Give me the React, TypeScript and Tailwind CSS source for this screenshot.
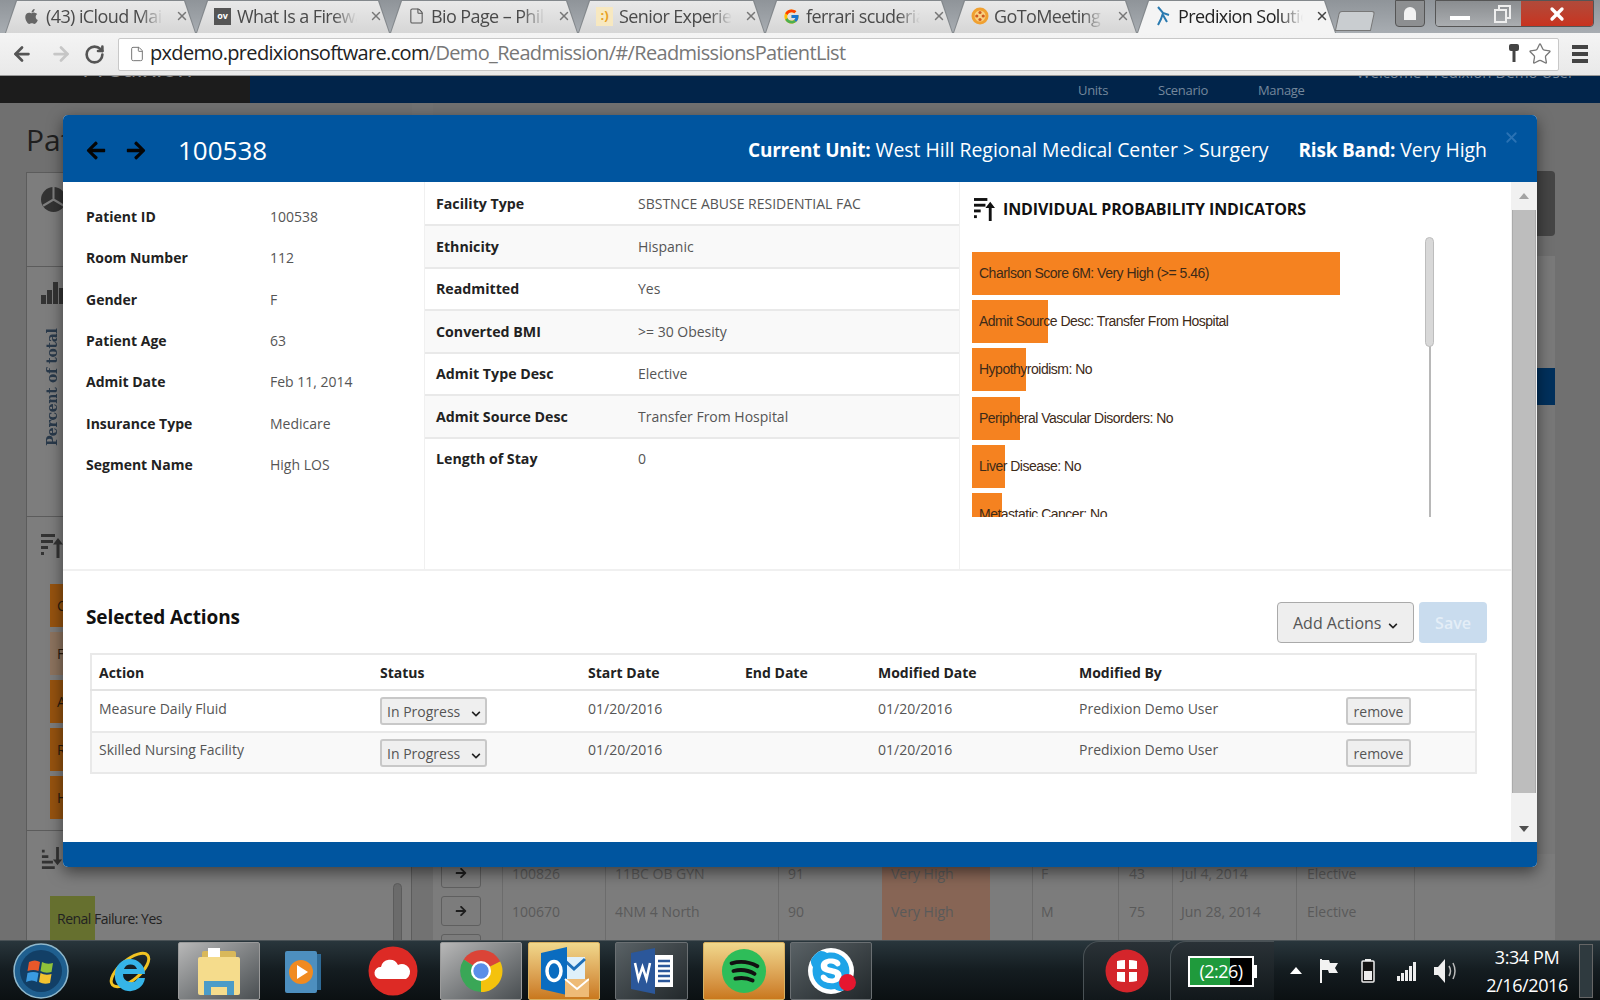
import { FaApple, FaArrowLeft, FaArrowRight, FaChevronDown, FaSkype } from "react-icons/fa";
import { FcGoogle } from "react-icons/fc";
import { ArrowLeft, ArrowRight, File, RotateCw, Star, X } from "lucide-react";
import type { ReactNode } from "react";

const tabs: { title: string; width: number; icon: ReactNode; active?: boolean }[] = [
  { title: "(43) iCloud Mail", width: 191, icon: <FaApple className="w-[17px] h-[17px] text-[#666]" /> },
  {
    title: "What Is a Firewall",
    width: 194,
    icon: <span className="w-[17px] h-[17px] bg-[#555] text-white text-[9px] font-bold flex items-center justify-center">ov</span>,
  },
  { title: "Bio Page – Philip", width: 188, icon: <File className="w-[17px] h-[18px] text-[#555]" strokeWidth={1.5} /> },
  {
    title: "Senior Experience",
    width: 187,
    icon: <span className="w-[17px] h-[19px] bg-[#f7e8c0] text-[#e8a020] text-[13px] font-bold flex items-center justify-center">:)</span>,
  },
  { title: "ferrari scuderia", width: 188, icon: <FcGoogle className="w-[17px] h-[17px]" /> },
  {
    title: "GoToMeeting",
    width: 184,
    icon: (
      <svg viewBox="0 0 18 18" className="w-[18px] h-[18px]">
        <circle cx="9" cy="9" r="8.5" fill="#f0a030" />
        <circle cx="9" cy="9" r="5.5" fill="#f8d080" />
        <circle cx="9" cy="5.5" r="1.6" fill="#d05a20" />
        <circle cx="9" cy="12.5" r="1.6" fill="#d05a20" />
        <circle cx="5.8" cy="9" r="1.6" fill="#d05a20" />
        <circle cx="12.2" cy="9" r="1.6" fill="#d05a20" />
      </svg>
    ),
  },
  {
    title: "Predixion Solutions",
    width: 199,
    active: true,
    icon: (
      <svg viewBox="0 0 16 22" className="w-[16px] h-[22px]" fill="none" stroke="#2a7ab0" strokeWidth="2">
        <path d="M3 2l5 6 6 2M8 8l-2 6-3 6M8 10l4 7" />
      </svg>
    ),
  },
];

const leftInfo = [
  ["Patient ID", "100538"],
  ["Room Number", "112"],
  ["Gender", "F"],
  ["Patient Age", "63"],
  ["Admit Date", "Feb 11, 2014"],
  ["Insurance Type", "Medicare"],
  ["Segment Name", "High LOS"],
];

const midInfo = [
  ["Facility Type", "SBSTNCE ABUSE RESIDENTIAL FAC"],
  ["Ethnicity", "Hispanic"],
  ["Readmitted", "Yes"],
  ["Converted BMI", ">= 30 Obesity"],
  ["Admit Type Desc", "Elective"],
  ["Admit Source Desc", "Transfer From Hospital"],
  ["Length of Stay", "0"],
];

const indicators = [
  { label: "Charlson Score 6M: Very High (>= 5.46)", width: 368 },
  { label: "Admit Source Desc: Transfer From Hospital", width: 76 },
  { label: "Hypothyroidism: No", width: 54 },
  { label: "Peripheral Vascular Disorders: No", width: 48 },
  { label: "Liver Disease: No", width: 33 },
  { label: "Metastatic Cancer: No", width: 30 },
];

const actions = ["Measure Daily Fluid", "Skilled Nursing Facility"];

const bgBars = [
  { label: "Charlson Score", color: "bg-[#96530f]" },
  { label: "Fluid", color: "bg-[#8c735e]" },
  { label: "Admit Source", color: "bg-[#96530f]" },
  { label: "Renal Failure", color: "bg-[#96530f]" },
  { label: "Hypertension", color: "bg-[#96530f]" },
];

const bgRows = [
  ["100826", "11BC OB GYN", "91", "F", "43", "Jul 4, 2014", "Elective"],
  ["100670", "4NM 4 North", "90", "M", "75", "Jun 28, 2014", "Elective"],
  ["", "", "", "", "", "", ""],
];

function SortIcon({ className }: { className: string }) {
  return (
    <svg viewBox="0 0 22 24" className={className} fill="currentColor">
      <rect x="0" y="0" width="14" height="3" />
      <rect x="0" y="6" width="12" height="3" />
      <rect x="0" y="12" width="7" height="3" />
      <rect x="0" y="18" width="3" height="3" />
      <path d="M15.5 24V10.5H12L17 4l5 6.5h-3.500V24z" />
    </svg>
  );
}

function Tab({ title, width, icon, active }: { title: string; width: number; icon: ReactNode; active?: boolean }) {
  return (
    <div
      className="h-[33px] bg-[#83888c] [clip-path:polygon(11px_0,calc(100%-11px)_0,100%_100%,0_100%)]"
      style={{ width }}
    >
      <div
        className={`h-[32px] mx-[1px] mt-[1px] pb-[2px] flex items-center pl-[17px] pr-[6px] [clip-path:polygon(11px_0,calc(100%-11px)_0,100%_100%,0_100%)] ${
          active ? "bg-[#f4f4f4] text-[#222]" : "bg-linear-to-b from-[#e9e9e9] to-[#d6d6d6] text-[#4a4a4a]"
        }`}
      >
        <span className="w-[23px] shrink-0 flex items-center">{icon}</span>
        <span className="flex-1 min-w-0 overflow-hidden whitespace-nowrap text-[18px] tracking-[-0.6px] [mask-image:linear-gradient(to_right,black_80%,transparent)]">
          {title}
        </span>
        <X className={`w-[14px] h-[14px] ml-[12px] shrink-0 ${active ? "text-[#444]" : "text-[#777]"}`} strokeWidth={2.5} />
      </div>
    </div>
  );
}

function BrowserChrome() {
  return (
    <div className="shrink-0 font-['Open_Sans',sans-serif]">
      <div className="h-[33px] flex items-end pl-[5px] bg-linear-to-b from-[#8f9499] to-[#a8adb2]">
        {tabs.map((t) => (
          <Tab key={t.title} {...t} />
        ))}
        <div className="w-[36px] h-[20px] ml-[1px] mb-[2px] bg-[#c9cdd0] border border-[#777] rounded-t-[3px] -skew-x-12" />
        <div className="self-start ml-[22px] w-[30px] h-[27px] rounded-b-[4px] border border-[#555] bg-[#8d8f91] flex items-center justify-center">
          <div className="w-[12px] h-[13px] bg-[#f2f2f2] rounded-t-full" />
        </div>
        <div className="self-start ml-[10px] w-[159px] h-[27px] rounded-b-[4px] border border-[#555] flex overflow-hidden">
          <div className="w-[47px] bg-linear-to-b from-[#8a8d90] to-[#aaadb0] flex items-end justify-center pb-[6px]">
            <div className="w-[20px] h-[4px] bg-white" />
          </div>
          <div className="w-[38px] bg-linear-to-b from-[#8a8d90] to-[#aaadb0] flex items-center justify-center">
            <svg viewBox="0 0 18 18" className="w-[18px] h-[18px]" fill="none" stroke="#eee" strokeWidth="2">
              <path d="M6 4V1h11v12h-3" />
              <rect x="2" y="5" width="11" height="12" />
            </svg>
          </div>
          <div className="flex-1 bg-linear-to-b from-[#b04a3a] to-[#c8321e] flex items-center justify-center">
            <X className="w-[20px] h-[20px] text-white" strokeWidth={4} />
          </div>
        </div>
      </div>
      <div className="h-[43px] flex items-center bg-linear-to-b from-[#f4f4f4] to-[#e9e9e9] border-b border-[#999]">
        <ArrowLeft className="w-[22px] h-[22px] ml-[11px] text-[#555]" strokeWidth={3} />
        <ArrowRight className="w-[22px] h-[22px] ml-[17px] text-[#c6c6c6]" strokeWidth={3} />
        <RotateCw className="w-[21px] h-[21px] ml-[12px] text-[#555]" strokeWidth={3} />
        <div className="ml-[13px] w-[1441px] h-[33px] bg-white border border-[#c8c8c8] rounded-[2px] flex items-center pl-[10px] pr-[6px]">
          <File className="w-[16px] h-[20px] text-[#777]" strokeWidth={1.5} />
          <span className="ml-[5px] -mt-[3px] flex-1 text-[20px] tracking-[-0.67px] text-[#777] whitespace-nowrap">
            <span className="text-[#222]">pxdemo.predixionsoftware.com</span>/Demo_Readmission/#/ReadmissionsPatientList
          </span>
          <svg viewBox="0 0 12 22" className="w-[12px] h-[22px]" fill="#444">
            <rect x="1" y="1" width="10" height="7" rx="2" />
            <rect x="4.500" y="8" width="3" height="11" />
          </svg>
          <Star className="w-[24px] h-[24px] ml-[8px] text-[#777]" strokeWidth={1.3} />
        </div>
        <div className="ml-[13px] flex flex-col gap-[3px]">
          <div className="w-[16px] h-[4px] bg-[#444]" />
          <div className="w-[16px] h-[4px] bg-[#444]" />
          <div className="w-[16px] h-[4px] bg-[#444]" />
        </div>
      </div>
    </div>
  );
}

function BackgroundPage() {
  return (
    <div className="flex-1 min-h-0 flex flex-col bg-[#707070] font-['Open_Sans',sans-serif] overflow-hidden">
      <div className="h-[27px] shrink-0 flex bg-[#01244a] overflow-hidden">
        <div className="w-[250px] bg-[#1c1c1c] pl-[82px] -mt-[27px] text-[25px] text-[#8a8a8a]">Predixion</div>
        <div className="w-[828px] shrink-0" />
        <div className="flex gap-[50px] pt-[5px] text-[13px] tracking-[-0.3px] text-[#75889c]">
          <span>Units</span>
          <span>Scenario</span>
          <span>Manage</span>
        </div>
        <div className="ml-[52px] -mt-[15px] text-[15px] text-[#75889c] whitespace-nowrap">Welcome Predixion Demo User</div>
      </div>

      <div className="flex-1 min-h-0 flex pl-[26px]">
        <div className="w-[386px] shrink-0 flex flex-col">
          <div className="h-[69px] shrink-0 pt-[12px] text-[30px] leading-[50px] text-[#1f1f1f]">Patient List</div>
          <div className="flex-1 border-l border-t border-r border-[#5c5c5c] bg-[#7d7d7d] text-[#3a3a3a] flex flex-col">
            <div className="h-[94px] shrink-0 border-b border-[#5c5c5c] pt-[14px] pl-[14px]">
              <svg viewBox="0 0 24 24" className="w-[25px] h-[25px]">
                <circle cx="12" cy="12" r="12" fill="#333" />
                <path d="M12 12V0M12 12l10 6M12 12L2 18" stroke="#7f7f7f" strokeWidth="2" />
              </svg>
            </div>
            <div className="h-[250px] shrink-0 border-b border-[#5c5c5c] pt-[15px] pl-[14px]">
              <svg viewBox="0 0 24 22" className="w-[24px] h-[22px]" fill="#333">
                <rect x="0" y="13" width="5" height="9" />
                <rect x="6" y="8" width="5" height="14" />
                <rect x="12" y="0" width="5" height="22" />
                <rect x="18" y="6" width="5" height="16" />
              </svg>
              <div className="mt-[24px] ml-[1px] h-[118px] [writing-mode:vertical-rl] rotate-180 text-[14px] font-bold text-[#29394a] font-['DejaVu_Serif',serif] whitespace-nowrap tracking-[-0.3px]">
                Percent of total
              </div>
            </div>
            <div className="h-[314px] shrink-0 border-b border-[#5c5c5c] pt-[17px] pl-[14px]">
              <SortIcon className="w-[22px] h-[24px] text-[#333]" />
              <div className="mt-[26px] ml-[9px] flex flex-col gap-[5px]">
                {bgBars.map((b) => (
                  <div key={b.label} className={`w-[200px] h-[43px] pl-[7px] flex items-center text-[14px] text-[#2a1a0c] ${b.color}`}>
                    {b.label}
                  </div>
                ))}
              </div>
            </div>
            <div className="flex-1 relative pt-[16px] pl-[14px]">
              <SortIcon className="w-[22px] h-[22px] text-[#333] -scale-y-100" />
              <div className="mt-[27px] ml-[9px] w-[45px] h-[44px] bg-[#66702f] pl-[7px] flex items-center text-[14px] tracking-[-0.5px] text-[#222] whitespace-nowrap">
                Renal Failure: Yes
              </div>
              <div className="absolute left-[366px] top-[52px] w-[9px] h-[80px] rounded-full bg-[#6b6b6b] border border-[#5c5c5c]" />
            </div>
          </div>
        </div>

        <div className="w-[21px] shrink-0 bg-[#727272]" />

        <div className="w-[1122px] shrink-0 flex flex-col pt-[68px] text-[14px] text-[#5a5a5a]">
          <div className="h-[65px] shrink-0 flex justify-end">
            <div className="w-[80px] bg-[#454545] rounded-r-[4px]" />
          </div>
          <div className="h-[20px] shrink-0" />
          <div className="h-[112px] shrink-0 bg-[#7a7a7a]" />
          <div className="h-[37px] shrink-0 bg-[#00305c]" />
          <div className="h-[449px] shrink-0 bg-[#787878]" />
          {bgRows.map((r, i) => (
            <div key={i} className="h-[38px] shrink-0 flex items-stretch bg-[#7c7c7c]">
              <div className="w-[69px] flex items-center pl-[8px]">
                <div className="w-[40px] h-[30px] rounded-[3px] border border-[#5f5f5f] bg-[#7c7c7c] flex items-center justify-center">
                  {r[0] && <FaArrowRight className="w-[12px] h-[12px] text-[#1e1e1e]" />}
                </div>
              </div>
              <div className="w-[103px] border-l border-[#6c6c6c] pl-[9px] flex items-center">{r[0]}</div>
              <div className="w-[173px] border-l border-[#6c6c6c] pl-[9px] flex items-center">{r[1]}</div>
              <div className="w-[104px] border-l border-[#6c6c6c] pl-[9px] flex items-center">{r[2]}</div>
              <div className="w-[108px] bg-[#876555] pl-[9px] flex items-center">{r[0] && "Very High"}</div>
              <div className="w-[42px]" />
              <div className="w-[86px] border-l border-[#6c6c6c] pl-[8px] flex items-center">{r[3]}</div>
              <div className="w-[54px] border-l border-[#6c6c6c] pl-[10px] flex items-center">{r[4]}</div>
              <div className="w-[124px] border-l border-[#6c6c6c] pl-[8px] flex items-center">{r[5]}</div>
              <div className="w-[118px] border-l border-[#6c6c6c] pl-[10px] flex items-center">{r[6]}</div>
              <div className="flex-1 border-l border-[#6c6c6c]" />
            </div>
          ))}
        </div>
      </div>
    </div>
  );
}

function Select() {
  return (
    <div className="w-[107px] h-[28px] rounded-[3px] border-2 border-[#c8c8c8] bg-[#efefef] flex items-center justify-between pl-[5px] pr-[4px] text-[#555]">
      In Progress
      <FaChevronDown className="w-[10px] h-[10px] text-[#222] mt-[6px]" />
    </div>
  );
}

function PatientModal() {
  return (
    <div className="absolute left-[63px] top-[39px] w-[1474px] h-[752px] flex flex-col rounded-[5px] overflow-hidden shadow-[0_5px_15px_rgba(0,0,0,0.5)] font-['Open_Sans',sans-serif] text-[14px] bg-white">
      <div className="relative h-[67px] shrink-0 bg-[#00559f] flex items-center pt-[3px] pl-[22px] pr-[50px]">
        <FaArrowLeft className="w-[22px] h-[21px] text-[#050505]" />
        <FaArrowRight className="w-[22px] h-[21px] text-[#050505] ml-[18px]" />
        <span className="ml-[31px] text-[26px] text-white">100538</span>
        <div className="ml-auto text-[19.4px] text-white whitespace-nowrap">
          <b className="text-[19px] tracking-[-0.2px]">Current Unit:</b> West Hill Regional Medical Center &gt; Surgery
          <b className="ml-[30px] text-[19px] tracking-[-0.2px]">Risk Band:</b> Very High
        </div>
        <X className="absolute right-[17px] top-[14px] w-[17px] h-[17px] text-[#2a72b4]" strokeWidth={2.5} />
      </div>

      <div className="flex-1 min-h-0 flex">
        <div className="flex-1 min-w-0 flex flex-col">
          <div className="h-[389px] shrink-0 flex border-b-2 border-[#f0f0f0]">
            <div className="w-[361px] shrink-0 pl-[23px] pt-[14px]">
              {leftInfo.map(([k, v]) => (
                <div key={k} className="h-[41.3px] flex items-center">
                  <span className="w-[184px] font-bold text-[14px] text-[#222]">{k}</span>
                  <span className="text-[#555]">{v}</span>
                </div>
              ))}
            </div>
            <div className="w-[536px] shrink-0 pt-[1.5px] border-x border-[#f0f0f0]">
              {midInfo.map(([k, v], i) => (
                <div
                  key={k}
                  className={`h-[42.5px] flex items-center pl-[11px] border-b-2 ${i < 6 ? "border-[#e9e9e9]" : "border-transparent"} ${i % 2 ? "bg-[#f9f9f9]" : "bg-white"}`}
                >
                  <span className="w-[202px] font-bold text-[14.2px] text-[#222]">{k}</span>
                  <span className="text-[#555]">{v}</span>
                </div>
              ))}
            </div>
            <div className="flex-1 min-w-0 pl-[12px] pt-[15px]">
              <div className="flex items-center h-[24px] pl-[2px]">
                <SortIcon className="w-[21px] h-[23px] text-[#111]" />
                <span className="ml-[8px] text-[16px] font-bold tracking-[-0.1px] text-[#111] whitespace-nowrap">INDIVIDUAL PROBABILITY INDICATORS</span>
              </div>
              <div className="relative mt-[16px] w-[462px] h-[280px] pt-[15px]">
                <div className="h-[265px] overflow-hidden flex flex-col gap-[5.2px]">
                  {indicators.map((b) => (
                    <div key={b.label} className="h-[43px] bg-[#f58220] flex items-center pl-[7px] shrink-0" style={{ width: b.width }}>
                      <span className="font-['Liberation_Sans',sans-serif] text-[14px] tracking-[-0.5px] text-[#3d2a18] whitespace-nowrap">{b.label}</span>
                    </div>
                  ))}
                </div>
                <div className="absolute left-[457px] top-[100px] bottom-0 w-[2px] bg-[#b8b8b8]" />
                <div className="absolute left-[453px] top-0 w-[9px] h-[110px] rounded-full bg-[#d8d8d8] border border-[#bdbdbd]" />
              </div>
            </div>
          </div>

          <div className="pl-[23px] pr-[24px] pt-[31px]">
            <div className="flex items-center h-[41px]">
              <span className="-mt-[10px] text-[19px] font-bold tracking-[-0.1px] text-[#111]">Selected Actions</span>
              <div className="ml-auto w-[137px] h-[41px] rounded-[4px] border border-[#aaa] bg-[#eeeeee] flex items-center pl-[15px] text-[16px] text-[#555]">
                Add Actions
                <FaChevronDown className="w-[10px] h-[10px] ml-[7px] mt-[6px] text-[#222]" />
              </div>
              <div className="ml-[5px] w-[68px] h-[41px] rounded-[4px] bg-[#c9dcee] flex items-center justify-center text-[16px] font-semibold text-[#e4eef7]">
                Save
              </div>
            </div>
            <table className="mt-[10px] ml-[4px] w-[1387px] table-fixed border-collapse border-2 border-[#e9e9e9] text-[#555]">
              <colgroup>
                <col className="w-[281px]" />
                <col className="w-[208px]" />
                <col className="w-[158px]" />
                <col className="w-[133px]" />
                <col className="w-[200px]" />
                <col className="w-[267px]" />
                <col />
              </colgroup>
              <thead>
                <tr className="h-[36px] border-b-2 border-[#e3e3e3] text-left text-[14px] text-[#222]">
                  <th className="pl-[7px] font-bold">Action</th>
                  <th className="pl-[8px] font-bold">Status</th>
                  <th className="pl-[8px] font-bold">Start Date</th>
                  <th className="pl-[7px] font-bold">End Date</th>
                  <th className="pl-[7px] font-bold">Modified Date</th>
                  <th className="pl-[8px] font-bold">Modified By</th>
                  <th />
                </tr>
              </thead>
              <tbody>
                {actions.map((a, i) => (
                  <tr key={a} className={`border-b-2 border-[#e9e9e9] align-top ${i % 2 ? "h-[41px] bg-[#f9f9f9]" : "h-[42px] bg-white"}`}>
                    <td className={`pl-[7px] ${i ? "pt-[6px]" : "pt-[7px]"}`}>{a}</td>
                    <td className="pl-[8px] pt-[6px]">
                      <Select />
                    </td>
                    <td className={`pl-[8px] ${i ? "pt-[6px]" : "pt-[7px]"}`}>01/20/2016</td>
                    <td />
                    <td className={`pl-[7px] ${i ? "pt-[6px]" : "pt-[7px]"}`}>01/20/2016</td>
                    <td className={`pl-[8px] ${i ? "pt-[6px]" : "pt-[7px]"}`}>Predixion Demo User</td>
                    <td className="pl-[8px] pt-[6px]">
                      <div className="w-[65px] h-[28px] rounded-[3px] border-2 border-[#c8c8c8] bg-[#efefef] flex items-center justify-center">remove</div>
                    </td>
                  </tr>
                ))}
              </tbody>
            </table>
          </div>
        </div>

        <div className="w-[26px] shrink-0 bg-[#f1f1f1] flex flex-col items-center">
          <div className="h-[28px] shrink-0 flex items-center justify-center">
            <div className="w-0 h-0 border-x-[5px] border-x-transparent border-b-[6px] border-b-[#a3a3a3]" />
          </div>
          <div className="w-[24px] h-[583px] bg-[#bdbdbd] border-x border-[#ababab]" />
          <div className="flex-1 flex items-end pb-[10px]">
            <div className="w-0 h-0 border-x-[5px] border-x-transparent border-t-[6px] border-t-[#505050]" />
          </div>
        </div>
      </div>

      <div className="h-[25px] shrink-0 bg-[#00559f]" />
    </div>
  );
}

function TaskButton({ lit, orange, className, children }: { lit?: boolean; orange?: boolean; className: string; children: ReactNode }) {
  return (
    <div
      className={`h-[58px] rounded-[2px] flex items-center justify-center ${className} ${
        orange
          ? "bg-linear-to-b from-[#f0d88c] to-[#c9781c] border border-[#d8b060]"
          : lit
            ? "bg-linear-to-br from-[#b8b8b8] to-[#4a4f52] border border-[#9a9a9a]"
            : "bg-linear-to-br from-[#5a6266] to-[#22282b] border border-[#6a6f72]"
      }`}
    >
      {children}
    </div>
  );
}

function Taskbar() {
  return (
    <div className="h-[60px] shrink-0 flex items-center bg-linear-to-b from-[#29363c] via-[#141c20] to-[#0b1012] border-t border-[#4a5256] font-['Open_Sans',sans-serif] text-white overflow-hidden">
      {/* start orb */}
      <svg viewBox="0 0 56 56" className="ml-[13px] w-[56px] h-[56px] shrink-0">
        <circle cx="28" cy="28" r="27" fill="#1f5f8f" stroke="#8fb8cc" strokeWidth="1.500" />
        <circle cx="28" cy="28" r="21" fill="#123f66" />
        <path d="M16 19q6-3 11 0l-1.500 9q-5-2-11 0z" fill="#e8582a" />
        <path d="M29 19q5 3 11 1l-1.500 9q-6 2-11-1z" fill="#8fc23a" />
        <path d="M14.500 30q6-2 11 0l-1.500 9q-5-3-11 0z" fill="#3a9ae0" />
        <path d="M27.500 30q5 3 11 1l-1.500 9q-6 2-11-1z" fill="#f2c230" />
      </svg>
      {/* ie */}
      <svg viewBox="0 0 46 50" className="ml-[38px] w-[46px] h-[50px] shrink-0">
        <ellipse cx="23" cy="24" rx="23" ry="10" transform="rotate(-40 23 24)" fill="none" stroke="#f2c322" strokeWidth="3" />
        <path d="M8 28a15 15 0 1 1 30 0H16a8 8 0 0 0 15 4h7a15 15 0 0 1-30-4zM17 23h13a7 7 0 0 0-13 0z" fill="#35b4e8" fillRule="evenodd" />
      </svg>
      <TaskButton lit className="ml-[25px] w-[82px]">
        <svg viewBox="0 0 50 52" className="w-[50px] h-[52px]">
          <rect x="8" y="6" width="34" height="34" rx="2" fill="#d9b85a" />
          <rect x="14" y="3" width="12" height="10" fill="#fff" />
          <rect x="4" y="12" width="42" height="38" rx="2" fill="#f5dc8c" />
          <path d="M10 50V36h30v14h-7v-8H17v8z" fill="#4b9cc8" />
        </svg>
      </TaskButton>
      <svg viewBox="0 0 40 50" className="ml-[23px] w-[40px] h-[50px] shrink-0">
        <rect x="2" y="5" width="32" height="42" rx="2" fill="#4d8fbf" />
        <rect x="34" y="8" width="4" height="36" fill="#2e6a96" />
        <circle cx="18" cy="26" r="12" fill="#f08a20" />
        <path d="M14 19l11 7-11 7z" fill="#fff" />
      </svg>
      <svg viewBox="0 0 50 50" className="ml-[45px] w-[50px] h-[50px] shrink-0">
        <circle cx="25" cy="25" r="24.500" fill="#dd2a25" />
        <path d="M12 33a6 6 0 0 1 1-12 9 9 0 0 1 17-2 7 7 0 0 1 8 14z" fill="#fff" />
      </svg>
      <TaskButton lit className="ml-[22px] w-[82px]">
        <svg viewBox="0 0 48 48" className="w-[46px] h-[46px]">
          <path d="M24 24L6 12A22 22 0 0 1 44 14z" fill="#db4437" />
          <path d="M24 24L44 14A22 22 0 0 1 24 46z" fill="#f4c20d" />
          <path d="M24 24V46A22 22 0 0 1 6 12z" fill="#3aa757" />
          <circle cx="24" cy="24" r="10.500" fill="#fff" />
          <circle cx="24" cy="24" r="8" fill="#5a8ee8" />
        </svg>
      </TaskButton>
      <TaskButton orange className="ml-[6px] w-[72px]">
        <svg viewBox="0 0 50 52" className="w-[50px] h-[52px]">
          <rect x="24" y="12" width="22" height="26" fill="#dff0fa" />
          <path d="M24 14l11 10 11-10" fill="none" stroke="#1e6fb8" strokeWidth="3" />
          <path d="M2 8l26-6v48L2 44z" fill="#0a6cc0" />
          <ellipse cx="15" cy="26" rx="7" ry="9.500" fill="none" stroke="#fff" strokeWidth="3.500" />
          <rect x="26" y="34" width="24" height="18" fill="#eebb77" />
          <path d="M26 34l12 10 12-10" fill="none" stroke="#fff" strokeWidth="2" />
        </svg>
      </TaskButton>
      <TaskButton className="ml-[15px] w-[73px]">
        <svg viewBox="0 0 46 48" className="w-[46px] h-[48px]">
          <path d="M2 6l24-5v46L2 42z" fill="#2b579a" />
          <rect x="26" y="8" width="18" height="32" fill="#fff" />
          <path d="M29 14h12M29 19h12M29 24h12M29 29h12M29 34h12" stroke="#2b579a" strokeWidth="2.500" />
          <path d="M6 16l3.500 16 4-12 4 12L21 16" fill="none" stroke="#fff" strokeWidth="2.500" />
        </svg>
      </TaskButton>
      <TaskButton orange className="ml-[15px] w-[82px]">
        <svg viewBox="0 0 48 48" className="w-[46px] h-[48px]">
          <circle cx="24" cy="24" r="23" fill="#2ebd59" />
          <path d="M11 16q14-4 27 3M13 24q12-3 22 3M15 32q10-2 18 2" fill="none" stroke="#111" strokeWidth="4" strokeLinecap="round" />
        </svg>
      </TaskButton>
      <TaskButton className="ml-[5px] w-[82px] relative">
        <FaSkype className="w-[46px] h-[46px] text-[#1ea4e8] bg-white rounded-full" />
        <div className="absolute right-[15px] bottom-[8px] w-[17px] h-[17px] rounded-full bg-[#e5162f]" />
      </TaskButton>

      <div className="ml-[211px] w-[87px] h-[60px] rounded-tl-[16px] border-l border-t border-[#4a5256] bg-linear-to-b from-[#2a3237] to-[#11171a] flex items-center justify-center">
        <svg viewBox="0 0 44 44" className="w-[44px] h-[44px]">
          <circle cx="22" cy="22" r="21.500" fill="#d4252b" />
          <path d="M12 20V12q4-1 8-1v9zM24 11q4 0 8 1v8h-8zM12 23h8v10q-4 0-8-1zM24 23h8v9q-4 1-8 1z" fill="#fff" />
        </svg>
      </div>
      <div className="w-[104px] h-[60px] rounded-tl-[16px] border-l border-t border-[#4a5256] bg-linear-to-b from-[#2a3237] to-[#11171a] pl-[17px] flex items-center">
        <div className="relative w-[66px] h-[31px] border-2 border-white bg-black overflow-hidden">
          <div className="absolute inset-y-0 left-0 w-[40px] bg-[#1f9a3c]" />
          <div className="absolute inset-0 flex items-center justify-center text-[18px] tracking-[-0.5px] text-white">(2:26)</div>
        </div>
        <div className="w-[3px] h-[13px] bg-white" />
      </div>
      <div className="ml-[16px] w-0 h-0 border-x-[6px] border-x-transparent border-b-[7px] border-b-white" />
      <svg viewBox="0 0 18 24" className="ml-[18px] w-[18px] h-[24px] shrink-0" fill="#f2f2f2">
        <rect x="0" y="0" width="2" height="24" />
        <path d="M2 1h7l1 3h8l-3 5 3 5H9l-1-3H2z" />
      </svg>
      <svg viewBox="0 0 14 24" className="ml-[23px] w-[14px] h-[24px] shrink-0">
        <rect x="4" y="0" width="6" height="2" fill="#eee" />
        <rect x="1" y="2" width="12" height="21" rx="1" fill="#111" stroke="#eee" strokeWidth="1.500" />
        <rect x="3" y="12" width="8" height="9" fill="#eee" />
      </svg>
      <svg viewBox="0 0 20 20" className="ml-[22px] w-[20px] h-[20px] shrink-0" fill="#eee">
        <rect x="0" y="15" width="3" height="5" />
        <rect x="4" y="12" width="3" height="8" />
        <rect x="8" y="9" width="3" height="11" />
        <rect x="12" y="5" width="3" height="15" />
        <rect x="16" y="1" width="3" height="19" />
      </svg>
      <svg viewBox="0 0 24 26" className="ml-[16px] w-[24px] h-[26px] shrink-0" fill="none">
        <path d="M1 9h4l7-8v24l-7-8H1z" fill="#eee" />
        <path d="M16 8q3 5 0 10M20 5q4 8 0 16" stroke="#bbb" strokeWidth="1.500" />
      </svg>
      <div className="ml-[21px] w-[98px] shrink-0 flex flex-col items-center text-[18px] leading-[28px] tracking-[-0.4px] whitespace-nowrap">
        <span>3:34 PM</span>
        <span>2/16/2016</span>
      </div>
      <div className="ml-[3px] w-[14px] h-[54px] border border-[#666] bg-[#2f3a3f] shrink-0" />
    </div>
  );
}

export default function App() {
  return (
    <div className="relative w-[1600px] h-[1000px] flex flex-col overflow-hidden bg-[#707070]">
      <BrowserChrome />
      <div className="relative flex-1 min-h-0 flex flex-col">
        <BackgroundPage />
        <PatientModal />
      </div>
      <Taskbar />
    </div>
  );
}
